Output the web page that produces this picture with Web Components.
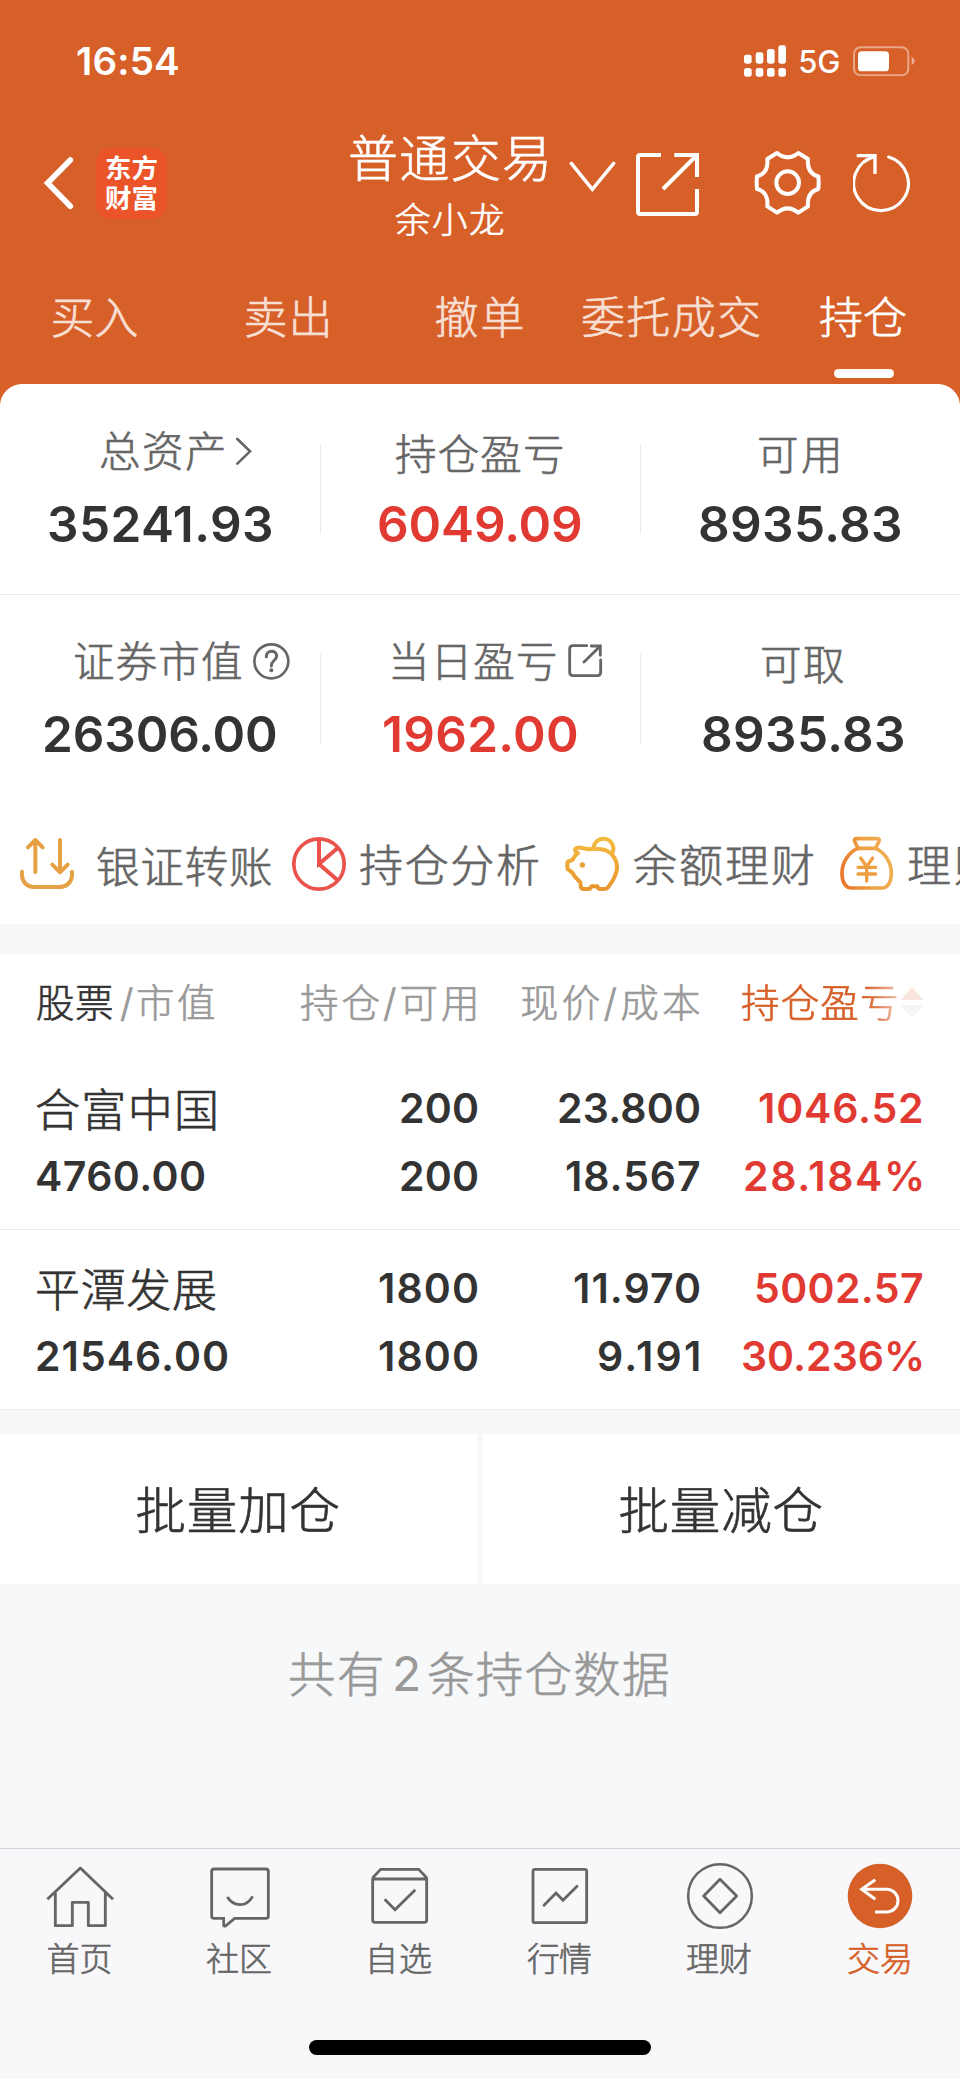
<!DOCTYPE html>
<html lang="zh-CN">
<head>
<meta charset="utf-8">
<title>普通交易</title>
<style>
body{margin:0;background:#f7f8fa;font-family:Inter,"Noto Sans CJK SC",sans-serif;color:#333}
</style>
</head>
<body>
<trade-app></trade-app>
<script>
const FONT = 'Inter,"Noto Sans CJK SC",sans-serif';

function define(name, html, init) {
  const tpl = document.createElement('template');
  tpl.innerHTML = html;
  customElements.define(name, class extends HTMLElement {
    connectedCallback() {
      if (this.shadowRoot) return;
      this.attachShadow({mode: 'open'}).appendChild(tpl.content.cloneNode(true));
      if (init) init.call(this, this.shadowRoot);
    }
  });
}

/* Text whose box is exactly as wide as its ink; tracking is spread to reach the width. */
const ctx = document.createElement('canvas').getContext('2d');
define('fit-text', `<style>
:host{display:block;flex:none;white-space:nowrap}
span{display:block;white-space:pre}
.cjk{padding-top:1px;-webkit-text-stroke:.65px currentColor}
</style><span></span>`, function (root) {
  const text = this.getAttribute('text'), w = +this.getAttribute('w');
  const size = +this.getAttribute('size');
  const cjk = /[\u4e00-\u9fff]/.test(text);
  const weight = this.getAttribute('weight') || (cjk ? 300 : 400);
  const line = this.getAttribute('line') || Math.round(size * 1.3);
  ctx.font = `${weight} ${size}px ${FONT}`;
  const m = ctx.measureText(text);
  const ink = m.actualBoundingBoxLeft + m.actualBoundingBoxRight;
  const span = root.querySelector('span');
  span.textContent = text;
  span.className = cjk ? 'cjk' : '';
  span.style.cssText = `font:${weight} ${size}px/${line}px ${FONT};letter-spacing:${(w - ink) / (text.length - 1 || 1)}px;margin-left:${m.actualBoundingBoxLeft}px`;
  this.style.width = w + 'px';
  this.style.height = line + 'px';
});

const ICONS = {
  signal: ['792 135 127 96', '<g fill="currentColor" stroke="none"><rect x="792" y="164" width="23" height="27" rx="7"/><rect x="827" y="157" width="23" height="34" rx="7"/><rect x="861" y="147" width="23" height="44" rx="7"/><rect x="895" y="136" width="23" height="55" rx="7"/><rect x="792" y="204" width="23" height="26" rx="8"/><rect x="827" y="204" width="23" height="26" rx="8"/><rect x="861" y="204" width="23" height="26" rx="8"/><rect x="895" y="204" width="23" height="26" rx="8"/></g>'],
  battery: ['1119 137 188 92', '<rect x="1122" y="141" width="163" height="84" rx="20" stroke-width="6" opacity=".45"/><rect x="1134" y="153" width="93" height="60" rx="11" fill="currentColor" stroke="none"/><path d="M1295 169q9 6 9 13t-9 13z" fill="currentColor" stroke="none" opacity=".5"/>'],
  back: ['129 468 93 162', '<path d="M211 480L143 549L211 619" stroke-width="17" stroke-linecap="round"/>'],
  down: ['267 483 141 93', '<path d="M274 490L337 568L401 490" stroke-width="10.5" stroke-linecap="round"/>'],
  share: ['468 456 192 195', '<path d="M543 465H480Q474 465 474 471V636Q474 642 480 642H645Q651 642 651 636V567M583 465H651V531M651 465L549 567" stroke-width="12"/>'],
  gear: ['822 450 201 198', '<path d="M891 459Q923 485 955 459L984 477Q980 520 1015 529Q1017 548 1015 567Q980 576 984 619L955 638Q923 612 891 638L862 619Q866 576 831 567Q829 548 831 529Q866 520 862 477Z" stroke-width="12" stroke-linejoin="round"/><circle cx="923" cy="548" r="34" stroke-width="12"/>'],
  refresh: ['1119 459 177 180', '<path d="M1226 471A82 82 0 1 1 1184 470" stroke-width="9.5" stroke-linecap="round"/><path d="M1130 467H1185V522" stroke-width="10"/>'],
  more: ['708 170 48 87', '<path d="M712 176L750 213L712 250" stroke-width="8" stroke-linecap="round"/>'],
  help: ['758 788 111 111', '<circle cx="813" cy="843" r="51" stroke-width="8"/><path d="M798 829C798 808 829 808 829 827C829 840 813 840 813 857" stroke-width="9" stroke-linecap="round"/><circle cx="813" cy="870" r="6" fill="currentColor" stroke="none"/>'],
  out: ['264 792 105 102', '<path d="M320 797H279Q269 797 269 807V877Q269 887 279 887H352Q362 887 362 877V840M334 798H361V826M361 798L312 846" stroke-width="8.5" stroke-linecap="round"/>'],
  transfer: ['60 111 165 159', '<path d="M106 216V121M84 142L106 120L128 142M180 120V216M157 194L180 217L203 194M66 215V225A35 36 0 0 0 101 261H181A35 36 0 0 0 216 225V215" stroke-width="12" stroke-linecap="round" stroke-linejoin="round"/>'],
  pie: ['876 111 162 162', '<circle cx="957" cy="192" r="75.5" stroke-width="11"/><path d="M957 118V192L1013 144M957 192L1013 241" stroke-width="12"/>'],
  pig: ['256 108 165 168', '<defs><linearGradient id="g" x1="0" y1="0" x2="0" y2="1"><stop offset="0" stop-color="#f3bb3f"/><stop offset="1" stop-color="#e8962f"/></linearGradient></defs><g stroke="url(#g)" stroke-width="12" stroke-linejoin="round"><path d="M286 148Q290 142 302 143L328 148Q340 145 366 148C392 152 412 174 412 202C412 218 406 228 400 240L386 261Q382 267 372 267H362Q354 267 353 259H335Q333 267 326 267H313Q303 267 303 257L302 247L285 229Q277 214 266 209Q263 207 263 202V190Q263 184 269 183Q279 182 283 173Q286 165 295 159Q286 155 286 148ZM342 146A29.5 29.5 0 1 1 396 162"/></g><circle cx="308" cy="195" r="8" fill="#e9a136" stroke="none"/>'],
  bag: ['1077 108 165 168', '<defs><linearGradient id="g" x1="0" y1=".6" x2="1" y2=".4"><stop offset="0" stop-color="#e9782c"/><stop offset=".5" stop-color="#ee9f42"/><stop offset="1" stop-color="#f0b155"/></linearGradient></defs><g stroke="url(#g)" stroke-width="11" stroke-linejoin="round"><path d="M1129 116H1192Q1200 117 1197 124L1186 145H1134L1124 124Q1121 117 1129 116ZM1134 145C1105 157 1086 188 1086 220C1086 248 1098 264 1115 264H1205C1222 264 1234 248 1234 220C1234 188 1215 157 1186 145"/></g><path d="M1142 174L1160 200L1178 174M1134 202H1187M1134 222H1187M1160 200V243" stroke="#ee9f42" stroke-width="10" stroke-linecap="round"/>'],
  home: ['135 93 210 210', '<path d="M142 208L241 114L339 208M166 188V287H217V217H265V287H316V188" stroke-width="8.5" stroke-linejoin="round"/>'],
  chat: ['615 93 210 210', '<path d="M642 117H798Q805 117 805 124V259Q805 265 798 265H704L678 287Q671 291 671 285V265H642Q635 265 635 259V124Q635 117 642 117ZM682 201Q696 224 720 224Q744 224 758 199" stroke-width="8.5"/>'],
  box: ['1095 93 210 210', '<path d="M1118 143L1142 118H1256L1280 143M1118 147H1280V270Q1280 277 1273 277H1125Q1118 277 1118 270V143M1280 143V150M1154 208L1185 239L1246 179" stroke-width="8.5"/>'],
  chart: ['135 93 210 210', '<rect x="159" y="118" width="161" height="160" rx="6" stroke-width="8.5"/><path d="M192 226L228 189L249 211L291 169" stroke-width="8.5" stroke-linecap="round"/>'],
  coin: ['615 93 210 210', '<circle cx="720" cy="198" r="95.5" stroke-width="7.5"/><path d="M720 148L770 198L720 248L671 198Z" stroke-width="8.5" stroke-linejoin="round"/>'],
  trade: ['1095 93 210 210', '<circle cx="1200" cy="198" r="97" fill="currentColor" stroke="none"/><path d="M1186 149L1145 178L1186 208M1147 178H1220A34 34 0 0 1 1220 246H1185" stroke="#fff" stroke-width="9"/>'],
  sort: ['1260 558 72 99', '<path d="M1262 600L1296 561L1330 600Z" fill="#d75f28" stroke="none"/><path d="M1262 615L1296 655L1330 615Z" fill="#bbb" stroke="none"/>']
};
define('ui-icon', `<style>:host{display:block;flex:none}svg{display:block;fill:none;stroke:currentColor}</style>`, function (root) {
  const [vb, body] = ICONS[this.getAttribute('name')];
  const [, , w, h] = vb.split(' ');
  root.innerHTML += `<svg viewBox="${vb}" width="${w / 3}" height="${h / 3}">${body}</svg>`;
});

define('status-bar', `<style>
:host{display:flex;align-items:center;height:122px;color:#fff}
</style>
<fit-text style="margin-left:77px" text="16:54" w="101" size="38.5" weight="600"></fit-text>
<ui-icon name="signal" style="margin-left:566px"></ui-icon>
<fit-text style="margin:2px 0 0 14px" text="5G" w="39" size="31" weight="500"></fit-text>
<ui-icon name="battery" style="margin-left:14px"></ui-icon>`);

define('nav-bar', `<style>
:host{display:flex;align-items:center;height:122px;color:#fff}
.logo{display:grid;align-content:center;justify-content:center;width:71px;height:71px;box-sizing:border-box;padding-bottom:3px;margin-left:22px;border-radius:15px;background:#eb5328;font:700 26.5px/30px "Noto Sans CJK SC",sans-serif}
.title{align-self:flex-start;width:200px;margin-left:182px}
</style>
<ui-icon name="back" style="margin-left:43px"></ui-icon>
<div class="logo"><span>东方</span><span>财富</span></div>
<div class="title">
<fit-text text="普通交易" w="197" size="50" line="72" style="margin-left:1px"></fit-text>
<fit-text text="余小龙" w="107" size="35.5" line="52" style="margin-left:47px"></fit-text>
</div>
<ui-icon name="down" style="margin:-13px 0 0 20px"></ui-icon>
<ui-icon name="share" style="margin:3px 0 0 20px"></ui-icon>
<ui-icon name="gear" style="margin-left:54px"></ui-icon>
<ui-icon name="refresh" style="margin-left:32px"></ui-icon>`);

define('top-tabs', `<style>
:host{display:grid;grid-template-columns:repeat(5,192px);height:140px;color:#f7dfd3}
div{display:flex;flex-direction:column;align-items:center;padding-top:43px;box-sizing:border-box}
fit-text{margin-left:-2px}
.on{color:#fff}
i{width:60px;height:9px;border-radius:5px;background:#fff;margin-top:22px}
</style>
<div><fit-text text="买入" w="85" size="44" line="60"></fit-text></div>
<div><fit-text text="卖出" w="83" size="44" line="60"></fit-text></div>
<div><fit-text text="撤单" w="87" size="44" line="60"></fit-text></div>
<div><fit-text text="委托成交" w="178" size="44" line="60"></fit-text></div>
<div class="on"><fit-text text="持仓" w="86" size="44" line="60"></fit-text><i></i></div>`);

define('stat-cell', `<style>
:host{display:block;position:relative;width:320px;height:210px}
.l{display:flex;align-items:flex-start;height:60px;color:#666}
.v{height:64px}
:host([line])::after{content:"";position:absolute;left:320px;top:60px;width:1px;height:90px;background:#ebebeb}
:host([red]) .v{color:#e03a33}
</style><div class="l"></div><div class="v"></div>`, function (root) {
  const a = n => this.getAttribute(n);
  const l = root.querySelector('.l'), v = root.querySelector('.v');
  l.style.paddingTop = a('ly') + 'px';
  l.style.height = (108 - a('ly')) + 'px';
  l.style.paddingLeft = a('lx') + 'px';
  v.style.paddingLeft = a('vx') + 'px';
  l.innerHTML = `<fit-text text="${a('label')}" w="${a('lw')}" size="41.5" line="60"></fit-text>` +
    (a('icon') ? `<ui-icon name="${a('icon')}" style="margin:${a('iy')}px 0 0 ${a('gap')}px"></ui-icon>` : '');
  v.innerHTML = `<fit-text text="${a('value')}" w="${a('vw')}" size="49.5" weight="600" line="64"></fit-text>`;
});

define('asset-summary', `<style>
:host{display:block;background:#fff;border-radius:22px 22px 0 0}
.r{display:grid;grid-template-columns:repeat(3,320px);height:210px}
.r+.r{border-top:1px solid #ebebeb;height:209px}
.r+.r stat-cell{margin-top:-1px}
</style>
<div class="r">
<stat-cell line label="总资产" lx="101" lw="123" ly="37" icon="more" iy="16" gap="12" value="35241.93" vx="49" vw="222"></stat-cell>
<stat-cell line red label="持仓盈亏" lx="76" lw="166" ly="40" value="6049.09" vx="59" vw="202"></stat-cell>
<stat-cell label="可用" lx="119" lw="79" ly="40" value="8935.83" vx="60" vw="200"></stat-cell>
</div>
<div class="r">
<stat-cell line label="证券市值" lx="75" lw="166" ly="37" icon="help" iy="12" gap="12" value="26306.00" vx="45" vw="231"></stat-cell>
<stat-cell line red label="当日盈亏" lx="72" lw="163" ly="37" icon="out" iy="13" gap="13" value="1962.00" vx="64" vw="193"></stat-cell>
<stat-cell label="可取" lx="122" lw="81" ly="40" value="8935.83" vx="63" vw="200"></stat-cell>
</div>`);

define('quick-actions', `<style>
:host{display:flex;align-items:flex-start;height:120px;background:#fff;color:#666;overflow:hidden}
fit-text{margin-top:31px}ui-icon{margin-top:32px}
</style>
<ui-icon name="transfer" style="margin-left:20px;margin-top:33px;color:#e6a145"></ui-icon>
<fit-text style="margin-left:22px;margin-top:32px" text="银证转账" w="174" size="43.5" line="60"></fit-text>
<ui-icon name="pie" style="margin-left:21px;margin-top:33px;color:#ea524b"></ui-icon>
<fit-text style="margin-left:14px" text="持仓分析" w="178" size="44" line="60"></fit-text>
<ui-icon name="pig" style="margin-left:27px"></ui-icon>
<fit-text style="margin-left:14px" text="余额理财" w="179" size="44" line="60"></fit-text>
<ui-icon name="bag" style="margin-left:26px"></ui-icon>
<fit-text style="margin-left:14px" text="理财" w="88" size="44" line="60"></fit-text>`);

define('table-head', `<style>
:host{display:flex;height:96px;color:#999;margin-top:30px;background:#fff;align-items:center;box-sizing:border-box}
.sort{display:flex;align-items:center;margin-left:43px;color:#d75f28;-webkit-mask-image:linear-gradient(90deg,#000 68%,rgba(0,0,0,.4) 86%,rgba(0,0,0,.15) 88%);mask-image:linear-gradient(90deg,#000 68%,rgba(0,0,0,.4) 86%,rgba(0,0,0,.15) 88%)}
</style>
<fit-text style="margin-left:37px;color:#333" text="股票" w="75" size="38.5"></fit-text>
<fit-text style="margin-left:8px" text="/市值" w="94" size="38.5"></fit-text>
<fit-text style="margin-left:87px" text="持仓/可用" w="174" size="38.5"></fit-text>
<fit-text style="margin-left:47px" text="现价/成本" w="177" size="38.5"></fit-text>
<div class="sort"><fit-text text="持仓盈亏" w="155" size="38.5"></fit-text><ui-icon name="sort" style="margin-left:3px"></ui-icon></div>`);

define('holding-row', `<style>
:host{display:block;height:180px;box-sizing:border-box;border-bottom:1px solid #ebebeb;background:#fff;padding-top:24px}
div{display:grid;grid-template-columns:275px 202px 222px 223px;height:68px}
fit-text{justify-self:end}
fit-text:first-child{justify-self:start;margin-left:37px}
fit-text:last-child{color:#e03a33}
</style><div></div><div></div>`, function (root) {
  JSON.parse(this.getAttribute('rows')).forEach((cells, r) => {
    root.querySelectorAll('div')[r].innerHTML = cells.map(([t, w], i) => {
      const name = !r && !i;
      return `<fit-text text="${t}" w="${w}" size="${name ? 45 : 41}" weight="${name ? 300 : 600}" line="${name ? 71 : 68}"></fit-text>`;
    }).join('');
  });
});

define('batch-actions', `<style>
:host{display:grid;grid-template-columns:1fr 1fr;gap:6px;margin-top:24px;height:150px}
div{background:#fff;display:grid;place-items:center;padding-top:2px}
fit-text{margin-left:-2px}
</style>
<div><fit-text text="批量加仓" w="202" size="50.5"></fit-text></div>
<div><fit-text text="批量减仓" w="202" size="50.5"></fit-text></div>`);

define('count-note', `<style>
:host{display:flex;height:264px;box-sizing:border-box;padding:55px 0 0 290px;color:#999}
</style>
<fit-text text="共有" w="92" size="47.5" line="70"></fit-text>
<fit-text style="margin-left:13px" text="2" w="23" size="48" line="70"></fit-text>
<fit-text style="margin-left:10px" text="条持仓数据" w="240" size="47.5" line="70"></fit-text>`);

define('tab-bar', `<style>
:host{display:block;height:231px;box-sizing:border-box;border-top:1px solid #d3d5d9;background:#f8f8fb;color:#666}
nav{display:grid;grid-template-columns:repeat(6,160px);height:191px}
nav div{display:flex;flex-direction:column;align-items:center;padding-top:12px}
.on{color:#d75f28}
fit-text{margin-left:-2px;margin-top:6px}
i{display:block;width:342px;height:15px;border-radius:8px;background:#000;margin:0 auto}
</style>
<nav>
<div><ui-icon name="home"></ui-icon><fit-text text="首页" w="63" size="33"></fit-text></div>
<div><ui-icon name="chat"></ui-icon><fit-text text="社区" w="64" size="33"></fit-text></div>
<div><ui-icon name="box"></ui-icon><fit-text text="自选" w="61" size="33" style="margin-left:1px"></fit-text></div>
<div><ui-icon name="chart"></ui-icon><fit-text text="行情" w="64" size="33"></fit-text></div>
<div><ui-icon name="coin"></ui-icon><fit-text text="理财" w="64" size="33"></fit-text></div>
<div class="on"><ui-icon name="trade"></ui-icon><fit-text text="交易" w="62" size="33"></fit-text></div>
</nav><i></i>`);

define('trade-app', `<style>
:host{display:block;width:960px;height:2079px;overflow:hidden;background:#f7f8fa}
header{background:#d75f28;height:384px}
main{background:linear-gradient(#d75f28 30px,transparent 30px)}
</style>
<header><status-bar></status-bar><nav-bar></nav-bar><top-tabs></top-tabs></header>
<main><asset-summary></asset-summary></main>
<quick-actions></quick-actions>
<table-head></table-head>
<holding-row rows='[[["合富中国",178],["200",76],["23.800",140],["1046.52",163]],[["4760.00",167],["200",76],["18.567",133],["28.184%",177]]]'></holding-row>
<holding-row rows='[[["平潭发展",179],["1800",98],["11.970",125],["5002.57",166]],[["21546.00",190],["1800",98],["9.191",100],["30.236%",179]]]'></holding-row>
<batch-actions></batch-actions>
<count-note></count-note>
<tab-bar></tab-bar>`);
</script>
</body>
</html>
